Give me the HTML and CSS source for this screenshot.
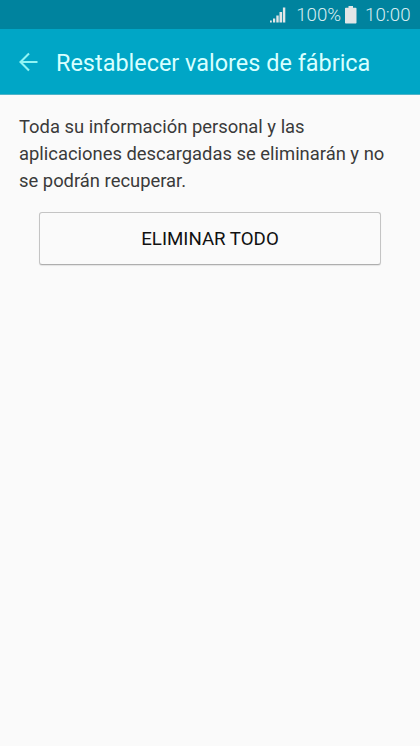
FILE: index.html
```html
<!DOCTYPE html>
<html lang="es">
<head>
<meta charset="utf-8">
<title>Restablecer valores de fábrica</title>
<link rel="stylesheet" href="styles.css">
</head>
<body>
<div class="status">
<svg class="signal" width="16" height="16" viewBox="0 0 16 16"><path d="M0 13.500h1.800V15.500H0zM3 11.500h2.200v4H3zM6.300 8.500h2.400v7H6.300zM9.500 5h2.600v10.500H9.500zM12.900 .5h2.400v15h-2.400z"/></svg>
<span class="percent">100%</span>
<svg class="battery" width="12" height="18" viewBox="0 0 12 18"><path d="M3.500 0h4.500v1.800h2.700q.8 0 .8.800v14.200q0 .7-.8.700H.8q-.8 0-.8-.7V2.600q0-.8.800-.8h2.700z"/></svg>
<span class="clock">10:00</span>
</div>
<header class="bar">
<svg class="back" width="20" height="20" viewBox="0 0 20 20"><path d="M19.500 10H2.500M11 1.500L2.500 10l8.500 8.500"/></svg>
<h1 class="title">Restablecer valores de fábrica</h1>
</header>
<main class="content">
<p class="message">Toda su información personal y las<br>aplicaciones descargadas se eliminarán y no<br>se podrán recuperar.</p>
<button class="erase">ELIMINAR TODO</button>
</main>
</body>
</html>
```
FILE: styles.css
```css
* { box-sizing: border-box; }
body { margin: 0; height: 746px; background: #fafafa; font-family: Roboto, sans-serif; overflow: hidden; }
.status { height: 29px; background: #00839e; display: flex; align-items: center; justify-content: flex-end; padding: 1px 9.5px 0 0; color: #d9edf1; font-size: 18.7px; font-weight: 300; fill: #e2e6e7; }
.signal { margin-right: 10.5px; }
.percent { margin-right: 4px; }
.battery { margin-right: 8px; }
.bar { height: 66px; background: #00a6c6; display: flex; align-items: center; padding-left: 17.500px; border-bottom: 1px solid #4fb3c8; }
.back { fill: none; stroke: #90f4f4; stroke-width: 2.1; margin: 0 18.500px 0 0; }
.title { margin: 3px 0 0; font-size: 23.45px; font-weight: 400; color: #d8ffff; white-space: nowrap; }
.content { padding: 18px 19px 0; display: flex; flex-direction: column; }
.message { margin: 0; font-size: 18.4px; line-height: 27px; color: #3a3a3a; white-space: nowrap; }
.erase { margin: 18px 20px 0; height: 53px; border: 1px solid #c4c4c4; border-bottom-color: #aeaeae; border-radius: 3px; background: #fafafa; font: 400 18.7px Roboto, sans-serif; color: #111; padding: 0; box-shadow: 0 1px 1px #e4e4e4; }
```
